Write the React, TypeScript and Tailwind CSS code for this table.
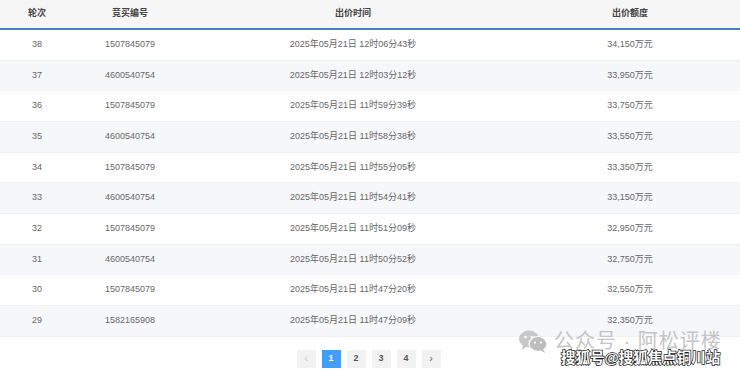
import React from "react";

const rows = [
  ["38", "1507845079", "2025年05月21日 12时06分43秒", "34,150万元"],
  ["37", "4600540754", "2025年05月21日 12时03分12秒", "33,950万元"],
  ["36", "1507845079", "2025年05月21日 11时59分39秒", "33,750万元"],
  ["35", "4600540754", "2025年05月21日 11时58分38秒", "33,550万元"],
  ["34", "1507845079", "2025年05月21日 11时55分05秒", "33,350万元"],
  ["33", "4600540754", "2025年05月21日 11时54分41秒", "33,150万元"],
  ["32", "1507845079", "2025年05月21日 11时51分09秒", "32,950万元"],
  ["31", "4600540754", "2025年05月21日 11时50分52秒", "32,750万元"],
  ["30", "1507845079", "2025年05月21日 11时47分20秒", "32,550万元"],
  ["29", "1582165908", "2025年05月21日 11时47分09秒", "32,350万元"],
];

function WeChat() {
  return (
    <svg width="30" height="24" viewBox="0 0 30 24">
      <ellipse cx="11" cy="10" rx="10" ry="8.5" fill="#c8c8c8" />
      <path d="M5 16 L4 21 L9 17 Z" fill="#c8c8c8" />
      <ellipse cx="20" cy="15" rx="9" ry="7.5" fill="#bdbdbd" stroke="#fff" strokeWidth="1.2" />
      <path d="M25 20 L27 24 L22 21 Z" fill="#bdbdbd" />
      <circle cx="7.5" cy="8" r="1.3" fill="#fff" />
      <circle cx="14" cy="8" r="1.3" fill="#fff" />
      <circle cx="17" cy="13.5" r="1.1" fill="#fff" />
      <circle cx="23" cy="13.5" r="1.1" fill="#fff" />
    </svg>
  );
}

export default function App() {
  const font = { fontFamily: '"Liberation Sans", "Noto Sans CJK SC", sans-serif' };
  return (
    <div className="relative w-[740px] h-[372px] bg-white overflow-hidden" style={font}>
      <div className="flex h-[28px] bg-[#f6f6f6] items-center text-[9px] font-bold text-[#444]">
        <div className="w-[74px] text-center">轮次</div>
        <div className="w-[112px] text-center">竞买编号</div>
        <div className="w-[334px] text-center">出价时间</div>
        <div className="w-[220px] text-center">出价额度</div>
      </div>
      <div className="h-[2px] bg-[#3f83c9]" />
      <div className="flex flex-col">
        {rows.map((r, i) => (
          <div
            key={r[0]}
            className={`flex h-[30.67px] items-center text-[9px] text-[#666] border-b border-[#eef0f3] ${
              i % 2 === 1 ? "bg-[#f6f7f9]" : "bg-white"
            }`}
          >
            <div className="w-[74px] text-center">{r[0]}</div>
            <div className="w-[112px] text-center">{r[1]}</div>
            <div className="w-[334px] text-center">{r[2]}</div>
            <div className="w-[220px] text-center">{r[3]}</div>
          </div>
        ))}
      </div>
      <div className="flex justify-center gap-[6px] mt-[13px] pr-[3px] text-[9px] font-bold text-[#555]">
        <div className="w-[19px] h-[18px] bg-[#f2f2f2] flex items-center justify-center text-[#c0c4cc] font-normal text-[11px]">‹</div>
        <div className="w-[19px] h-[18px] bg-[#409eff] flex items-center justify-center text-white">1</div>
        <div className="w-[19px] h-[18px] bg-[#f2f2f2] flex items-center justify-center">2</div>
        <div className="w-[19px] h-[18px] bg-[#f2f2f2] flex items-center justify-center">3</div>
        <div className="w-[19px] h-[18px] bg-[#f2f2f2] flex items-center justify-center">4</div>
        <div className="w-[19px] h-[18px] bg-[#f2f2f2] flex items-center justify-center text-[#666] font-normal text-[11px]">›</div>
      </div>
      <div className="absolute left-[518px] top-[329px] flex items-center gap-[6px]">
        <WeChat />
        <span className="text-[20px] text-[#c4c4c4] tracking-[1px] leading-none">公众号 · 阿松评楼</span>
      </div>
      <div
        className="absolute left-[561px] top-[351px] text-[14.5px] font-bold text-white leading-none"
        style={{ WebkitTextStroke: "1.5px #222", paintOrder: "stroke fill" }}
      >
        搜狐号@搜狐焦点铜川站
      </div>
    </div>
  );
}
